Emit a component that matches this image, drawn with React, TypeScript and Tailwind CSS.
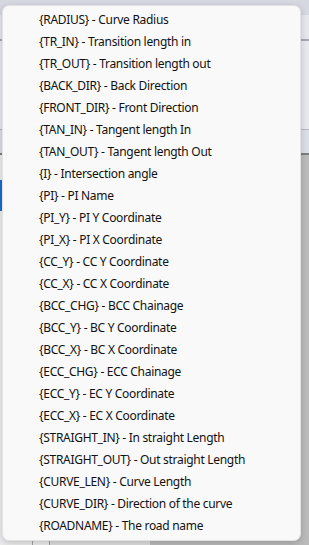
const items: [string, string][] = [
  ['{RADIUS}', 'Curve Radius'],
  ['{TR_IN}', 'Transition length in'],
  ['{TR_OUT}', 'Transition length out'],
  ['{BACK_DIR}', 'Back Direction'],
  ['{FRONT_DIR}', 'Front Direction'],
  ['{TAN_IN}', 'Tangent length In'],
  ['{TAN_OUT}', 'Tangent length Out'],
  ['{I}', 'Intersection angle'],
  ['{PI}', 'PI Name'],
  ['{PI_Y}', 'PI Y Coordinate'],
  ['{PI_X}', 'PI X Coordinate'],
  ['{CC_Y}', 'CC Y Coordinate'],
  ['{CC_X}', 'CC X Coordinate'],
  ['{BCC_CHG}', 'BCC Chainage'],
  ['{BCC_Y}', 'BC Y Coordinate'],
  ['{BCC_X}', 'BC X Coordinate'],
  ['{ECC_CHG}', 'ECC Chainage'],
  ['{ECC_Y}', 'EC Y Coordinate'],
  ['{ECC_X}', 'EC X Coordinate'],
  ['{STRAIGHT_IN}', 'In straight Length'],
  ['{STRAIGHT_OUT}', 'Out straight Length'],
  ['{CURVE_LEN}', 'Curve Length'],
  ['{CURVE_DIR}', 'Direction of the curve'],
  ['{ROADNAME}', 'The road name'],
];

export default function App() {
  return (
    <div
      className="relative w-[309px] h-[545px] overflow-hidden flex flex-col bg-[#e6e8ee]"
      style={{ fontFamily: '"Noto Sans", sans-serif' }}
    >
      {/* window behind the menu */}
      <div className="h-[15px] bg-[#d5d8e0]" />
      <div className="h-[26px] bg-[#e5e7ed] border-b-2 border-[#a5a8b2]" />
      <div className="h-[89px] bg-[#e6e8ee] border-b border-[#b4b7c0]" />
      <div className="h-[25px] bg-[#dadee6] border-b-2 border-[#7c7c7c]" />
      <div className="flex-1 flex">
        <div className="w-[150px] bg-[#ebedf1] flex flex-col">
          <div className="w-[2px] mt-[25px] h-[31px] bg-[#1a6fd0]" />
          <div className="flex-1" />
          <div className="h-[4px] flex">
            <div className="w-[33px] bg-[#ececec] border-r border-[#a0a0a0]" />
            <div className="w-[17px] bg-[#ececec] border-r border-[#a0a0a0]" />
            <div className="flex-1 bg-[#dedede]" />
          </div>
        </div>
        <div className="flex-1 bg-[#bababa]" />
      </div>

      {/* context menu */}
      <div className="absolute left-[2px] top-[5px] w-[299px] h-[536px] rounded-[7px] bg-[#f9f9f9] border border-[#e2e2e2] shadow-[0_2px_6px_rgba(0,0,0,0.18)] pt-[3px]">
        {items.map(([key, label]) => (
          <div key={key} className="h-[22px] flex items-center pl-[36px] text-[12px] tracking-[-0.3px] text-[#111111] whitespace-nowrap">
            {key} - {label}
          </div>
        ))}
      </div>
    </div>
  );
}
